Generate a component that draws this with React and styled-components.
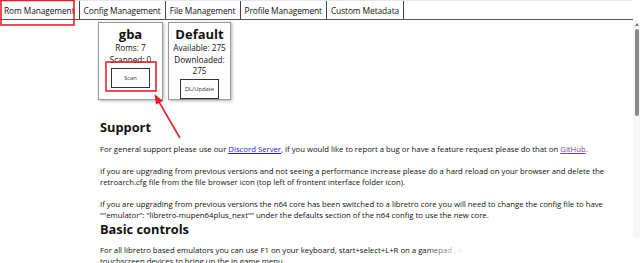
import React from "react";
import styled, { createGlobalStyle } from "styled-components";

const tabs = [
  "Rom Management",
  "Config Management",
  "File Management",
  "Profile Management",
  "Custom Metadata"
];

export default function App() {
  return (
    <Page>
      <GlobalStyle />
      <TabBar>
        {tabs.map(t => (
          <Tab key={t}>{t}</Tab>
        ))}
      </TabBar>
      <Body>
        <Content>
          <Cards>
            <Card $w={65}>
              <CardTitle>gba</CardTitle>
              <CardLine>Roms: 7</CardLine>
              <CardLine>Scanned: 0</CardLine>
              <CardButton>Scan</CardButton>
            </Card>
            <Card $w={63}>
              <CardTitle>Default</CardTitle>
              <CardLine>Available: 275</CardLine>
              <CardLine>Downloaded: 275</CardLine>
              <CardButton>DL/Update</CardButton>
            </Card>
          </Cards>

          <Heading>Support</Heading>
          <Para>
            For general support please use our <Link href="#">Discord Server</Link>, if you
            would like to report a bug or have a feature request please do that on{" "}
            <Link href="#" $visited>GitHub</Link>.
          </Para>
          <Para>
            If you are upgrading from previous versions and not seeing a performance increase
            please do a hard reload on your browser and delete the retroarch.cfg file from the
            file browser icon (top left of frontent interface folder icon).
          </Para>
          <Para>
            If you are upgrading from previous versions the n64 core has been switched to a
            libretro core you will need to change the config file to have
            ""emulator": "libretro-mupen64plus_next"" under the defaults section of the n64
            config to use the new core.
          </Para>

          <Heading>Basic controls</Heading>
          <Para>
            For all libretro based emulators you can use F1 on your keyboard,
            start+select+L+R on a gamepad , or tap the top left of the screen on
            touchscreen devices to bring up the in game menu.
          </Para>
        </Content>
        <ScrollTrack>
          <ScrollArrow />
          <ScrollThumb />
        </ScrollTrack>
      </Body>

      <Fade />
      <Annotations width="640" height="263" viewBox="0 0 640 263">
        <rect x="1" y="0.5" width="73" height="24.5" fill="none" stroke="#e8202a" strokeWidth="1.6" />
        <rect x="106" y="62" width="50" height="29" fill="none" stroke="#e8202a" strokeWidth="1.6" />
        <line x1="180" y1="138" x2="159" y2="102" stroke="#e8202a" strokeWidth="1.6" />
        <polygon points="154.5,94 163,101 156,104.5" fill="#e8202a" />
      </Annotations>
    </Page>
  );
}

const GlobalStyle = createGlobalStyle`
  html, body {
    margin: 0;
    background: #fff;
  }
  body {
    font-family: "Open Sans", "Noto Sans", sans-serif;
    color: #111;
  }
`;

const Page = styled.div`
  position: relative;
  display: flex;
  flex-direction: column;
  width: 640px;
  height: 263px;
  overflow: hidden;
`;

const TabBar = styled.div`
  display: flex;
  height: 18px;
  margin-right: 7px;
  border-top: 1px solid #e4e7ee;
  border-bottom: 1px solid #555;
  box-sizing: content-box;
`;

const Tab = styled.div`
  display: flex;
  align-items: center;
  padding: 0 4px;
  font-size: 8.4px;
  letter-spacing: -0.1px;
  border-right: 1px solid #444;
  color: #111;
  background: #fff;
`;

const Body = styled.div`
  flex: 1;
  display: flex;
  min-height: 0;
`;

const Content = styled.div`
  flex: 1;
  overflow: hidden;
  padding: 2px 22px 20px 100px;
`;

const ScrollTrack = styled.div`
  width: 7px;
  display: flex;
  flex-direction: column;
  align-items: center;
  background: #f7f7f7;
  padding-top: 3px;
`;

const ScrollArrow = styled.div`
  width: 0;
  height: 0;
  border-left: 2px solid transparent;
  border-right: 2px solid transparent;
  border-bottom: 3px solid #777;
  margin-bottom: 3px;
`;

const ScrollThumb = styled.div`
  width: 4px;
  height: 87px;
  border-radius: 2px;
  background: #8a8a8a;
`;

const Cards = styled.div`
  display: flex;
  gap: 5px;
  margin: 0 0 19px -2px;
`;

const Card = styled.div`
  display: flex;
  flex-direction: column;
  align-items: center;
  box-sizing: border-box;
  width: ${p => p.$w}px;
  height: 78px;
  padding-top: 3px;
  border: 1px solid #999;
  box-shadow: 1px 1px 3px rgba(0, 0, 0, 0.3);
  text-align: center;
`;

const CardTitle = styled.div`
  font-size: 13px;
  font-weight: 700;
  line-height: 16px;
`;

const CardLine = styled.div`
  font-size: 8.2px;
  line-height: 11.5px;
`;

const CardButton = styled.div`
  margin-top: 2.5px;
  display: flex;
  align-items: center;
  justify-content: center;
  height: 20px;
  padding: 0 4px;
  min-width: 39px;
  box-sizing: border-box;
  border: 1px solid #333;
  background: #fff;
  font-size: 5.8px;
  color: #333;
`;

const Heading = styled.h2`
  margin: 0 0 8.5px;
  font-size: 12.8px;
  line-height: 16px;
  font-weight: 700;
`;

const Para = styled.p`
  margin: 0;
  font-size: 7.75px;
  line-height: 11px;
  & + & {
    margin-top: 11px;
  }
`;

const Link = styled.a`
  color: ${p => (p.$visited ? "#7a3fa8" : "#1a1aee")};
  text-decoration: underline;
`;

const Fade = styled.div`
  position: absolute;
  left: 425px;
  right: 0;
  bottom: 0;
  height: 25px;
  background: linear-gradient(to right, rgba(255, 255, 255, 0), #fff 40px);
  pointer-events: none;
`;

const Annotations = styled.svg`
  position: absolute;
  inset: 0;
  pointer-events: none;
`;
